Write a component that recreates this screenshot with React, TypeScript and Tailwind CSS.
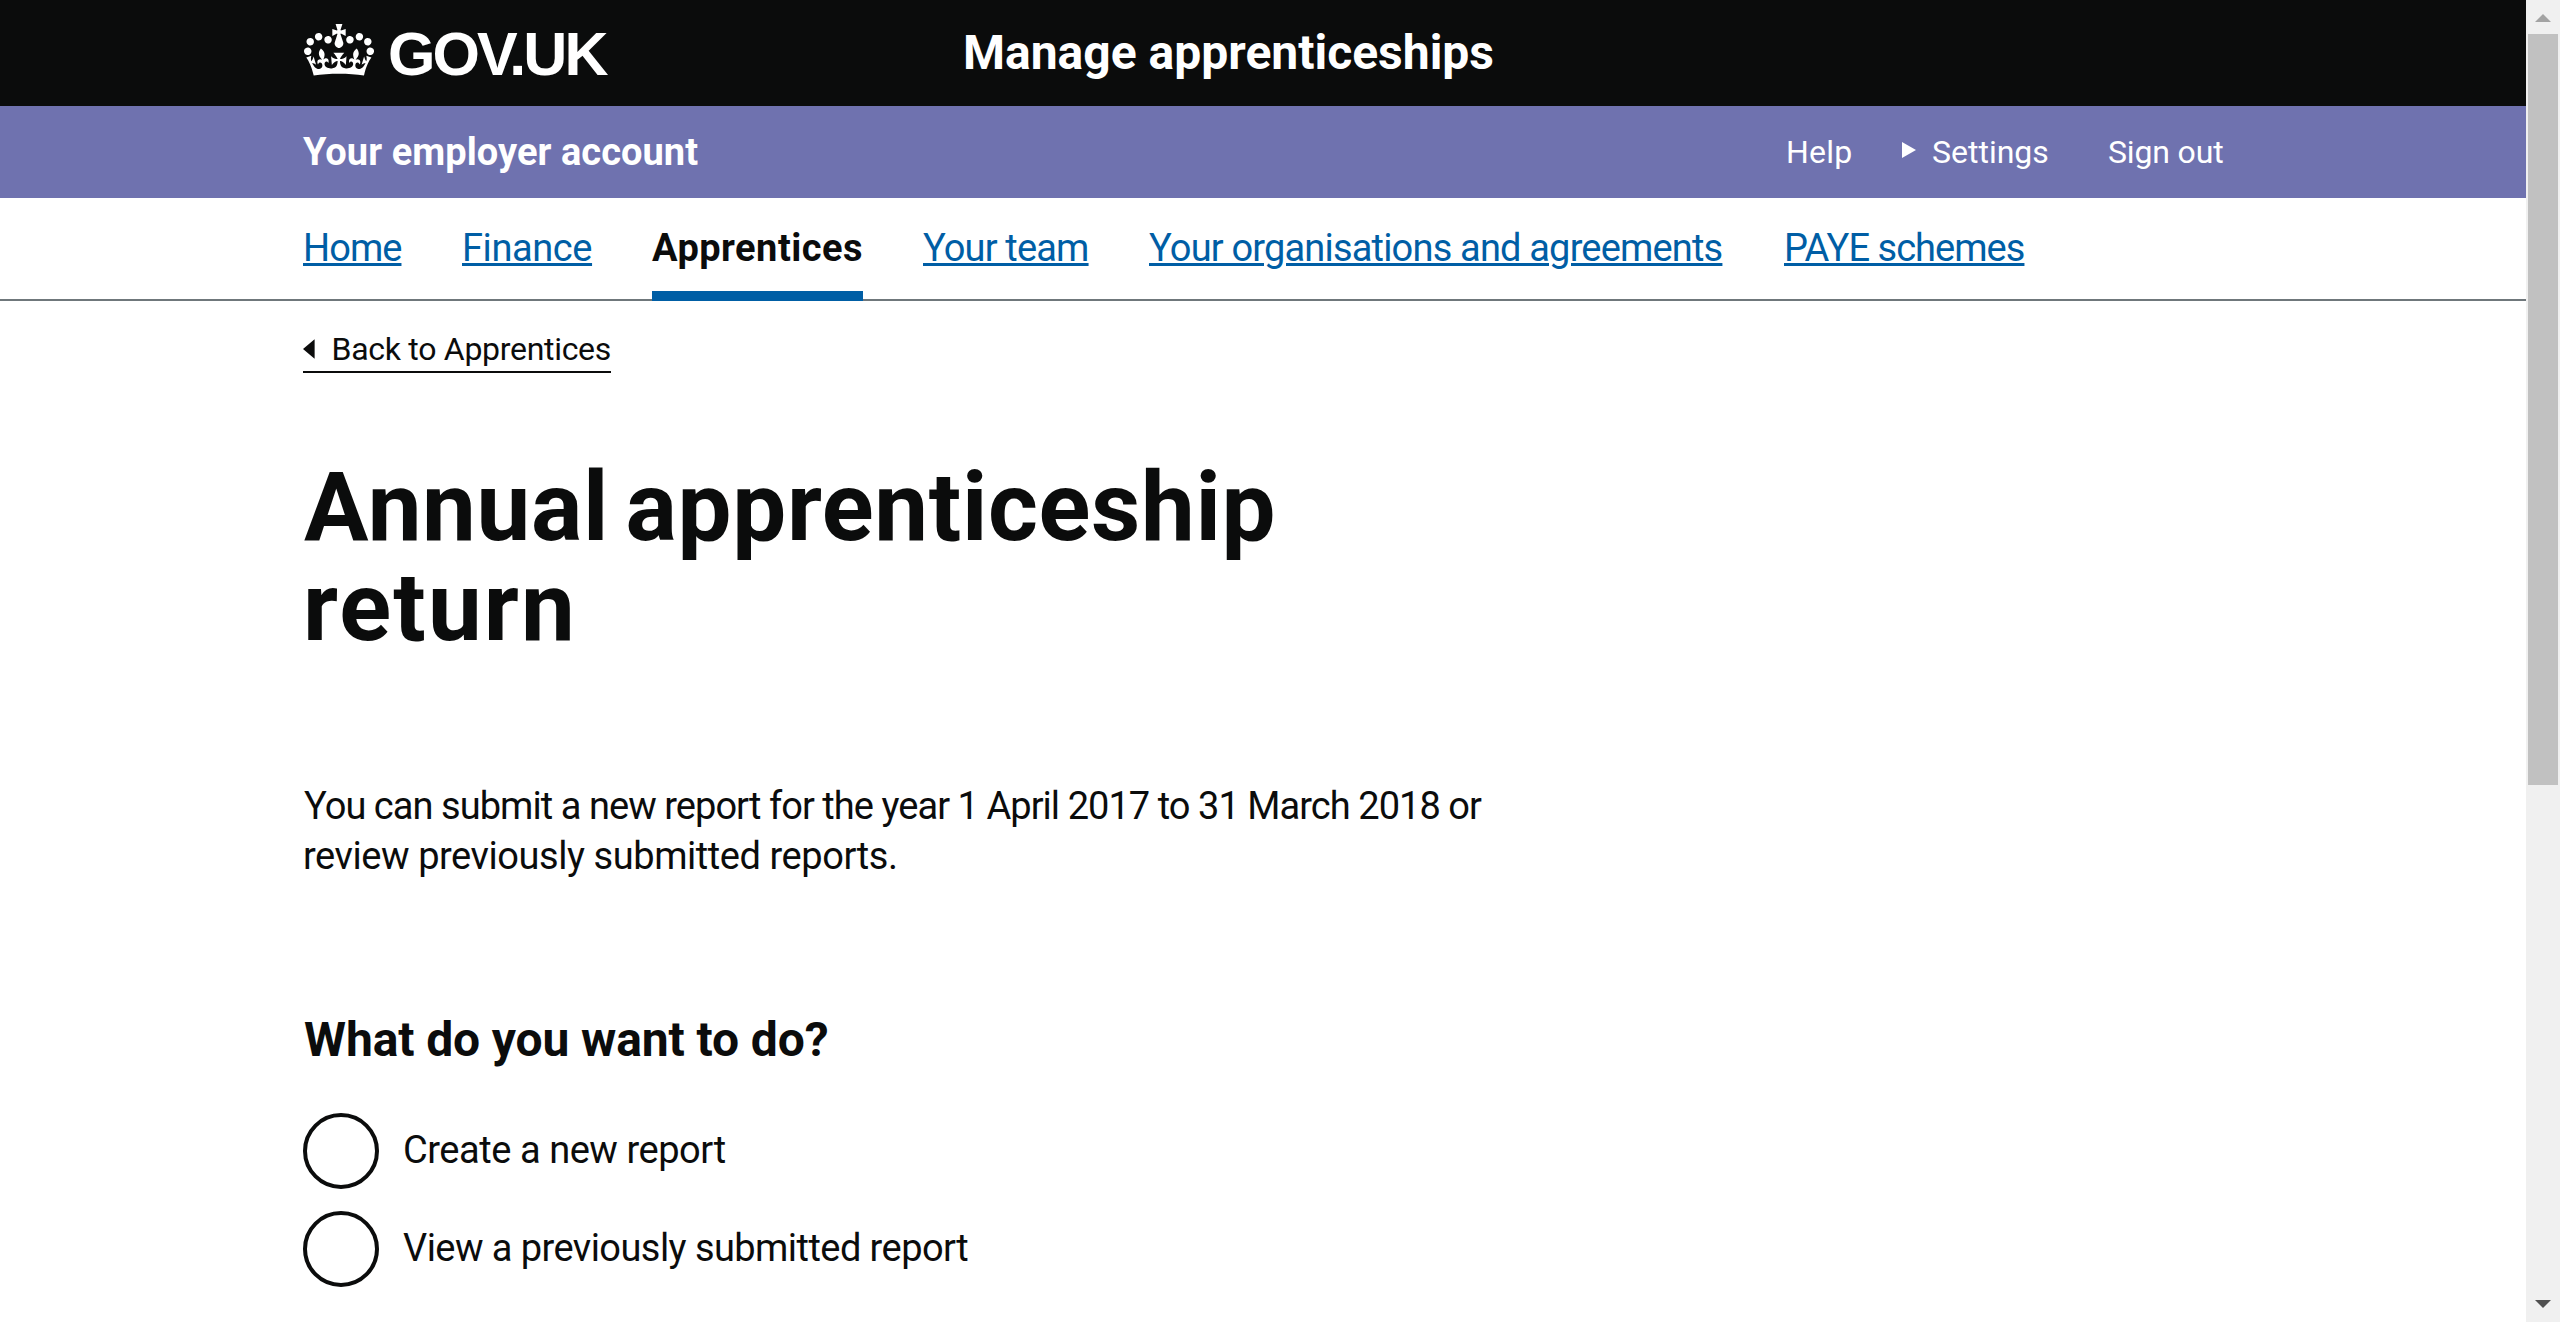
import React from 'react';

function Crown() {
  return (
    <svg className="h-[52px] w-[70px] shrink-0" viewBox="0 0 132 97" preserveAspectRatio="none" fill="#fff" fillRule="evenodd" aria-hidden="true">
      <path d="M25 30.2c3.5 1.5 7.7-.2 9.1-3.7 1.5-3.6-.2-7.8-3.9-9.2-3.600-1.400-7.600.3-9.100 3.900-1.400 3.500.3 7.500 3.900 9zM9 39.500c3.600 1.500 7.800-.2 9.200-3.700 1.500-3.600-.2-7.800-3.900-9.100-3.600-1.500-7.600.2-9.100 3.800-1.400 3.500.3 7.500 3.800 9zM4.400 57.200c3.500 1.500 7.700-.2 9.100-3.800 1.500-3.600-.2-7.700-3.900-9.100-3.500-1.500-7.600.3-9.100 3.800-1.400 3.500.3 7.600 3.900 9.100zm38.300-21.400c3.500 1.500 7.700-.2 9.100-3.800 1.500-3.600-.2-7.700-3.900-9.100-3.600-1.500-7.600.3-9.100 3.800-1.300 3.600.4 7.700 3.900 9.100zm64.400-5.600c-3.600 1.500-7.800-.2-9.100-3.700-1.500-3.600.2-7.800 3.800-9.200 3.600-1.400 7.700.3 9.200 3.900 1.300 3.500-.4 7.500-3.900 9zm15.900 9.300c-3.600 1.500-7.700-.2-9.100-3.700-1.500-3.600.2-7.800 3.700-9.100 3.600-1.500 7.700.2 9.200 3.800 1.500 3.500-.3 7.500-3.800 9zm4.700 17.700c-3.600 1.500-7.800-.2-9.200-3.800-1.500-3.600.2-7.700 3.900-9.100 3.600-1.500 7.700.3 9.200 3.800 1.300 3.500-.4 7.600-3.900 9.100zM89.300 35.800c-3.600 1.500-7.800-.2-9.200-3.800-1.400-3.600.2-7.700 3.900-9.100 3.600-1.500 7.700.3 9.200 3.800 1.400 3.600-.3 7.700-3.900 9.100zM69.700 17.700l8.900 4.700V9.300l-8.900 2.800c-.2-.3-.5-.6-.9-.9L72.400 0H59.600l3.500 11.200c-.3.3-.6.5-.9.9l-8.800-2.800v13.100l8.800-4.700c.3.3.6.7.9.9l-5 15.400v.1c-.2.8-.4 1.6-.4 2.400 0 4.100 3.100 7.500 7 8.100h.2c.3 0 .7.1 1 .1.4 0 .7 0 1-.1h.2c4-.6 7.100-4.100 7.100-8.100 0-.8-.1-1.700-.4-2.400V34l-5.100-15.400c.4-.2.7-.6 1-.9zM66 92.800c16.900 0 32.800 1.100 47.100 3.200 4-16.900 8.900-26.700 14-33.500l-9.600-3.400c1 4.900 1.100 7.200 0 10.200-1.500-1.400-3-4.300-4.200-8.700L108.600 76c2.800-2 5-3.200 7.500-3.300-4.400 9.400-10 11.900-13.600 11.200-4.300-.8-6.300-4.600-5.600-7.900 1-4.700 5.700-5.900 8-.5 4.300-8.700-3-11.400-7.600-8.800 7.100-7.200 7.900-13.500 2.100-21.100-8 6.100-8.100 12.300-4.500 20.800-4.700-5.400-12.100-2.500-9.500 6.200 3.400-5.200 7.900-2 7.200 3.100-.6 4.300-6.400 7.800-13.500 7.200-10.300-.9-10.900-8-11.200-13.800 2.500-.5 7.100 1.800 11 7.300L80.200 60c-4.100 4.400-8 5.300-12.300 5.400 1.400-4.400 8-11.600 8-11.600H55.500s6.400 7.200 7.900 11.600c-4.200-.1-8-1-12.300-5.400l1.400 16.400c3.900-5.500 8.500-7.700 10.900-7.300-.3 5.800-.9 12.800-11.100 13.800-7.200.6-12.900-2.900-13.500-7.200-.7-5 3.800-8.300 7.100-3.100 2.700-8.700-4.600-11.600-9.400-6.200 3.700-8.500 3.600-14.700-4.600-20.800-5.800 7.600-5 13.900 2.200 21.100-4.700-2.600-11.900.1-7.700 8.800 2.300-5.500 7.100-4.200 8.100.5.700 3.300-1.300 7.100-5.700 7.900-3.500.7-9-1.800-13.500-11.200 2.500.1 4.700 1.300 7.500 3.300l-4.700-15.400c-1.200 4.400-2.700 7.200-4.300 8.700-1.100-3-.9-5.300 0-10.200l-9.500 3.400c5 6.900 9.900 16.700 14 33.500 14.800-2.100 30.800-3.200 47.700-3.200z" />
    </svg>
  );
}

const link = 'flex h-[103px] items-center pb-[3px] text-[#005ea5] underline decoration-[3px] underline-offset-2';

function Radio({ children, className }: { children: React.ReactNode; className: string }) {
  return (
    <label className="flex h-[76px] items-center">
      <span className="h-[76px] w-[76px] shrink-0 rounded-full border-4 border-[#0b0c0c]" />
      <span className={`ml-6 pb-[2px] ${className}`}>{children}</span>
    </label>
  );
}

export default function App() {
  return (
    <div className="flex h-[1322px] overflow-hidden bg-white font-['Roboto',sans-serif] text-[38px] text-[#0b0c0c]">
      <div className="flex-1">
        <header className="flex h-[106px] items-center bg-[#0b0c0c] pl-[304px] text-white">
          <div className="flex w-[659px] items-center">
            <div className="pb-[6px]">
              <Crown />
            </div>
            <span className="ml-[14px] pt-[2px] font-['Liberation_Sans',Arial,sans-serif] text-[61px] leading-none font-bold tracking-[-2.9px] whitespace-nowrap">
              GOV.UK
            </span>
          </div>
          <span className="text-5xl font-bold whitespace-nowrap">Manage apprenticeships</span>
        </header>

        <div className="flex h-[92px] items-center bg-[#6f72af] pl-[303px] text-white">
          <span className="w-[1482px] font-bold tracking-[0.05px]">Your employer account</span>
          <nav className="flex items-center text-[32px] whitespace-nowrap">
            <span className="w-[117px] pl-[1px] tracking-[0.2px]">Help</span>
            <svg className="mb-[4px] h-4 w-[14px]" viewBox="0 0 14 16" fill="#fff" aria-hidden="true">
              <path d="M0 0L14 8L0 16Z" />
            </svg>
            <span className="ml-4 w-[176px]">Settings</span>
            <span className="tracking-[-0.15px]">Sign out</span>
          </nav>
        </div>

        <nav className="flex h-[103px] gap-[60px] border-b-2 border-[#6f777b] pl-[303px] whitespace-nowrap">
          <a className={`${link} w-[99px] tracking-[-0.95px]`}>Home</a>
          <a className={`${link} w-[130px] tracking-[-0.41px]`}>Finance</a>
          <a className="flex h-[103px] w-[211px] items-center border-b-[10px] border-[#005ea5] pt-[7px] font-bold tracking-[0.47px]">
            Apprentices
          </a>
          <a className={`${link} w-[166px] tracking-[-0.84px]`}>Your team</a>
          <a className={`${link} w-[575px] tracking-[-0.82px]`}>Your organisations and agreements</a>
          <a className={`${link} tracking-[-0.96px]`}>PAYE schemes</a>
        </nav>

        <main className="pl-[303px]">
          <a className="mt-[26px] flex h-[46px] w-[308px] items-center border-b-2 border-[#0b0c0c] text-[32px] tracking-[-0.3px] whitespace-nowrap">
            <svg className="h-5 w-3" viewBox="0 0 12 20" fill="#0b0c0c" aria-hidden="true">
              <path d="M12 0L0 10L12 20Z" />
            </svg>
            <span className="ml-[17px]">Back to Apprentices</span>
          </a>

          <h1 className="mt-[84px] text-[96px] leading-[100px] font-bold">
            <span className="block pl-[1px] tracking-[0.65px] [word-spacing:-8px]">Annual apprenticeship</span>
            <span className="block tracking-[2.1px]">return</span>
          </h1>

          <p className="mt-[124px] leading-[50px] whitespace-nowrap">
            <span className="block pl-[1px] tracking-[-0.95px]">
              You can submit a new report for the year 1 April 2017 to 31 March 2018 or
            </span>
            <span className="block tracking-[-0.44px]">review previously submitted reports.</span>
          </p>

          <h2 className="mt-[134px] pl-[1px] text-5xl leading-[50px] font-bold tracking-[-0.12px]">
            What do you want to do?
          </h2>

          <div className="mt-12 flex flex-col gap-[22px]">
            <Radio className="tracking-[-0.45px]">Create a new report</Radio>
            <Radio className="tracking-[-0.56px]">View a previously submitted report</Radio>
          </div>
        </main>
      </div>

      <div className="flex w-[34px] shrink-0 flex-col items-center bg-[#f0f0f0]">
        <svg className="mt-[14px] h-2 w-4" viewBox="0 0 16 8" fill="#a3a3a3" aria-hidden="true">
          <path d="M8 0L16 8H0Z" />
        </svg>
        <div className="mt-3 h-[751px] w-[30px] bg-[#c1c1c1]" />
        <svg className="mt-auto mb-[14px] h-2 w-4" viewBox="0 0 16 8" fill="#505050" aria-hidden="true">
          <path d="M0 0H16L8 8Z" />
        </svg>
      </div>
    </div>
  );
}
